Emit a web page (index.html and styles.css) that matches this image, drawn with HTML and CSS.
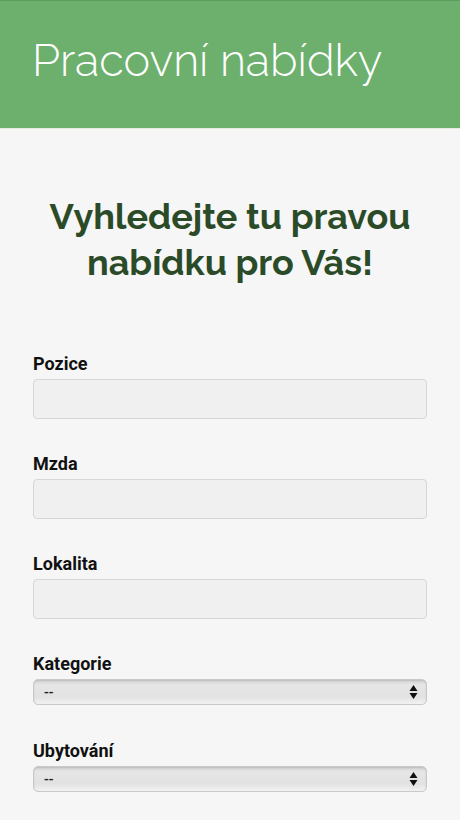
FILE: index.html
```html
<!DOCTYPE html>
<html lang="cs">

<head>
  <meta charset="utf-8">
  <title>Pracovní nabídky</title>
  <link rel="stylesheet" href="styles.css">
</head>

<body>
  <header class="topbar">
    <h1>Pracovní nabídky</h1>
  </header>

  <main>
    <h2>Vyhledejte tu pravou nabídku pro Vás!</h2>

    <form class="search">
      <label for="pozice">Pozice</label>
      <input type="text" id="pozice" name="pozice" />

      <label for="mzda">Mzda</label>
      <input type="text" id="mzda" name="mzda" />

      <label for="lokalita">Lokalita</label>
      <input type="text" id="lokalita" name="lokalita" />

      <label for="kategorie">Kategorie</label>
      <div class="select">
        <select id="kategorie" name="kategorie">
          <option>--</option>
        </select>
        <svg class="arrows" width="9" height="16" viewBox="0 0 9 16">
          <path d="M4.5 1 L8.5 7 L0.5 7 Z M0.5 9 L8.5 9 L4.5 15 Z" fill="#111" />
        </svg>
      </div>

      <label for="ubytovani">Ubytování</label>
      <div class="select">
        <select id="ubytovani" name="ubytovani">
          <option>--</option>
        </select>
        <svg class="arrows" width="9" height="16" viewBox="0 0 9 16">
          <path d="M4.5 1 L8.5 7 L0.5 7 Z M0.5 9 L8.5 9 L4.5 15 Z" fill="#111" />
        </svg>
      </div>
    </form>
  </main>
</body>

</html>
```

FILE: styles.css
```css
body {
  margin: 0;
  background: #f6f6f6;
  font-family: Roboto, 'Liberation Sans', sans-serif;
}

.topbar {
  background: #6db06e;
  border-top: 1px solid #5d9a5e;
  border-bottom: 1px solid #e4ece2;
  height: 129px;
  box-sizing: border-box;
  padding: 0 32px;
}

.topbar h1 {
  margin: 0;
  padding-top: 33px;
  font-family: Raleway, Lato, sans-serif;
  font-weight: 300;
  font-size: 45px;
  line-height: 54px;
  color: white;
}

main {
  padding: 0 33px 0 33px;
}

main h2 {
  margin: 64px 0 0;
  text-align: center;
  font-family: Raleway, Lato, sans-serif;
  font-weight: 700;
  font-size: 36px;
  line-height: 46px;
  color: #2b4b28;
}

.search {
  margin-top: 68px;
}

.search label {
  display: block;
  font-weight: 700;
  font-size: 18px;
  line-height: 21px;
  color: #111;
  margin-bottom: 6px;
}

.search input {
  display: block;
  box-sizing: border-box;
  width: 100%;
  height: 40px;
  margin: -1px 0 34px;
  background: #f0f0f0;
  border: 1px solid #d6d6d6;
  border-radius: 4px;
}

.select {
  position: relative;
  margin: -1px 0 35px;
}

.select select {
  display: block;
  box-sizing: border-box;
  width: 100%;
  height: 26px;
  padding: 0 10px;
  appearance: none;
  -webkit-appearance: none;
  font-family: Roboto, 'Liberation Sans', sans-serif;
  font-size: 14px;
  font-weight: 500;
  color: #222;
  background: linear-gradient(#d4d4d4, #e6e6e6 20%, #e2e2e2 70%, #f2f2f2);
  border: 1px solid #c9c9c9;
  border-radius: 5px;
  box-shadow: inset 0 1px 2px rgba(0, 0, 0, 0.12);
}

.select .arrows {
  position: absolute;
  right: 9px;
  top: 5px;
  pointer-events: none;
}
```
